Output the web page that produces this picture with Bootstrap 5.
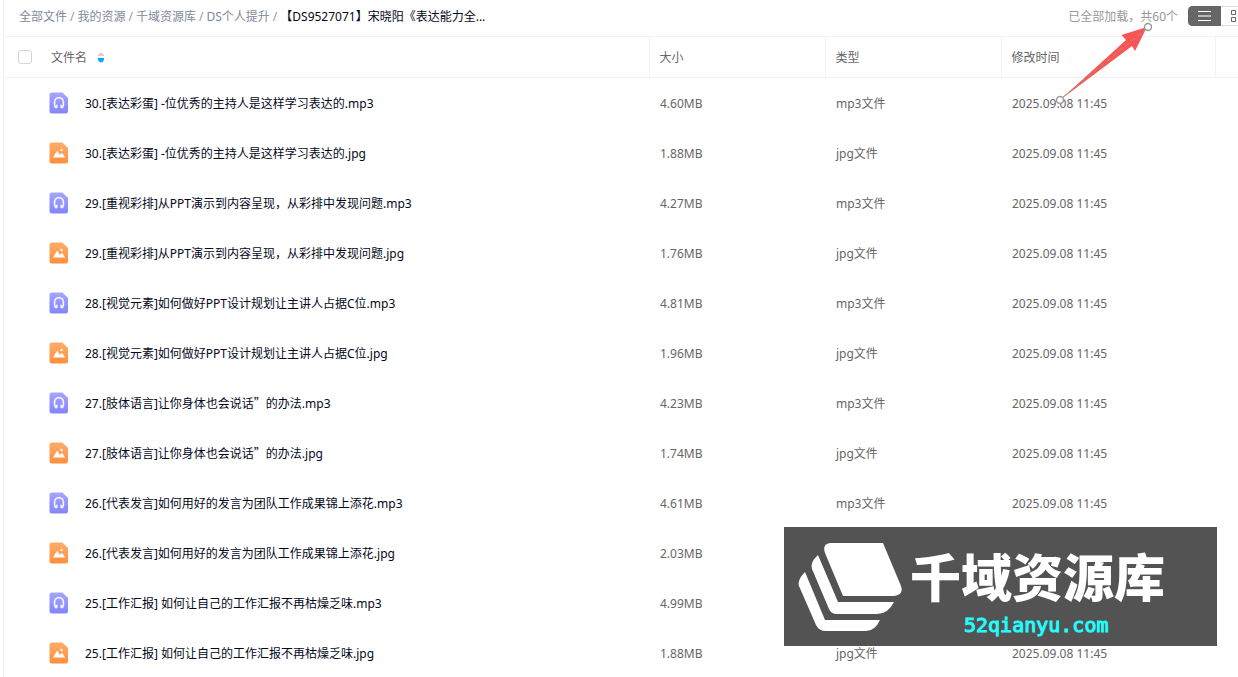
<!DOCTYPE html>
<html lang="zh-CN">
<head>
<meta charset="utf-8">
<meta name="viewport" content="width=device-width, initial-scale=1">
<title>千域资源库</title>
<link href="https://cdn.jsdelivr.net/npm/bootstrap@5.3.0/dist/css/bootstrap.min.css" rel="stylesheet">
<style>
body { font-family: "Noto Sans", "Noto Sans CJK SC", sans-serif; font-size: 12px; line-height: 18px; color: #636d7e; }
.pan { margin-left: 3px; border-left: 1px solid #f1f2f4; }
.topbar { height: 36px; padding-left: 15px; padding-bottom: 4px; }
.breadcrumb { --bs-breadcrumb-divider: "/"; --bs-breadcrumb-item-padding-x: 3px; --bs-breadcrumb-divider-color: #999; --bs-breadcrumb-item-active-color: #03081a; padding-top: 2px; }
.breadcrumb a { color: #818999; }
.loaded { color: #999; margin-right: 10px; padding-top: 2px; }
.view-switch { margin-right: -15px; }
.view-switch .btn { width: 33px; height: 20px; padding: 0; line-height: 0; border: 1px solid #dcdcdc; border-radius: 4px; background: #fff; }
.view-switch .btn.active { background: #666; border-color: #666; }
.view-switch svg { display: block; margin: auto; }
.files { table-layout: fixed; --bs-table-bg: transparent; margin: 0; }
.files > :not(caption) > * > * { border: 0; padding: 2px 10px 0; vertical-align: middle; color: #666; }
.files > thead > tr > th { height: 41px; font-weight: 400; border: solid #f1f2f4; border-width: 1px 0 1px 1px; }
.files > thead > tr > th:first-child { border-left: 0; padding-left: 14px; }
.files > tbody > tr > td { height: 50px; padding: 2px 11px 0; }
.files > tbody > tr > td:first-child { padding-left: 45px; }
.files > tbody a { color: #03081a; }
.files .form-check-input { width: 14px; height: 14px; margin: 0 19px 2px 0; border-color: #d4d4d4; border-radius: 3px; }
.col-info { width: 176px; }
.col-time { width: 214px; }
.col-end { width: 23px; }
.sort { font-size: 12px; line-height: 18px; color: #666; }
.file-icon { width: 20px; height: 22px; margin: 0 16px 2px 0; vertical-align: middle; }
.file-icon + a { vertical-align: middle; }
.full-width { font-family: "Noto Sans CJK SC", sans-serif; }
.pointer { right: 86px; top: 20px; pointer-events: none; }
.brand-mark { right: 21px; bottom: 31px; width: 433px; height: 119px; padding-left: 14px; background: #535353; }
.brand-name { font-family: "Noto Sans CJK SC", sans-serif; font-weight: 900; font-size: 51px; line-height: 60px; color: #fff; padding-top: 12px; }
.brand-url { font-family: "DejaVu Sans Mono", monospace; font-size: 20px; line-height: 32px; color: #2ff; padding: 4px 0 0 54px; -webkit-text-stroke: 1px #2ff; }
</style>
</head>
<body>
<svg width="0" height="0" class="position-absolute" aria-hidden="true">
  <defs>
    <linearGradient id="violet" x2="0" y2="1"><stop stop-color="#a5a5ff"/><stop offset="1" stop-color="#8585fb"/></linearGradient>
    <linearGradient id="amber" x2="0" y2="1"><stop stop-color="#ffad6b"/><stop offset="1" stop-color="#ff8e3c"/></linearGradient>
    <symbol id="audio" viewBox="0 0 20 22">
      <path fill="url(#violet)" d="M3 .5h10.500l5.500 5.500v13a2.500 2.500 0 0 1-2.500 2.500h-13.500a2.500 2.500 0 0 1-2.500-2.500v-16a2.500 2.500 0 0 1 2.500-2.500z"/>
      <path fill="none" stroke="#f2f2ff" stroke-width="1.700" d="M8.200 15.500H6.500L5.600 13V10a4.400 4.400 0 0 1 8.800 0V13L13.500 15.500H11.800M7.800 15.800V12.800M12.200 15.800V12.800"/>
    </symbol>
    <symbol id="image" viewBox="0 0 20 22">
      <path fill="url(#amber)" d="M3 .5h10.500l5.500 5.500v13a2.500 2.500 0 0 1-2.500 2.500h-13.500a2.500 2.500 0 0 1-2.500-2.500v-16a2.500 2.500 0 0 1 2.500-2.500z"/>
      <path fill="#fff" d="M4 15.500l3.700-6.200q.5-.7 1 0l2.300 3.700 1.300-1.800q.5-.6 1 0l2.900 4.300z"/><circle cx="12.500" cy="8" r="1.200" fill="#fff"/>
    </symbol>
  </defs>
</svg>

<div class="position-relative vh-100 overflow-hidden">
  <main class="pan h-100">
    <header class="topbar d-flex align-items-center">
      <nav aria-label="路径">
        <ol class="breadcrumb flex-nowrap text-nowrap mb-0">
          <li class="breadcrumb-item"><a class="text-decoration-none" href="#">全部文件</a></li>
          <li class="breadcrumb-item"><a class="text-decoration-none" href="#">我的资源</a></li>
          <li class="breadcrumb-item"><a class="text-decoration-none" href="#">千域资源库</a></li>
          <li class="breadcrumb-item"><a class="text-decoration-none" href="#">DS个人提升</a></li>
          <li class="breadcrumb-item active" aria-current="page">【DS9527071】宋晓阳《表达能力全...</li>
        </ol>
      </nav>
      <span class="loaded ms-auto text-nowrap">已全部加载，共60个</span>
      <div class="btn-group view-switch" role="group" aria-label="显示方式">
        <button type="button" class="btn active" aria-label="列表"><svg width="13" height="12" stroke="#fff"><path d="M0 1.500h13M0 10.500h13"/><path d="M0 6h13" stroke="#bbb" stroke-width="2"/></svg></button>
        <button type="button" class="btn" aria-label="网格"><svg width="12" height="12" fill="none" stroke="#666"><path d="M.5.5h4v4h-4zM7.500.5h4v4h-4zM.5 7.500h4v4h-4zM7.500 7.500h4v4h-4z"/></svg></button>
      </div>
    </header>

    <table class="table files text-nowrap">
      <colgroup><col><col class="col-info"><col class="col-info"><col class="col-time"><col class="col-end"></colgroup>
      <thead>
        <tr>
          <th scope="col"><div class="d-flex align-items-center"><input class="form-check-input" type="checkbox" aria-label="全选"><button type="button" class="sort btn btn-link p-0 border-0 text-decoration-none d-flex align-items-center">文件名<svg class="ms-2" width="12" height="12" aria-hidden="true"><path d="M3 4V3Q6-2 9 3V4z" fill="#d0d0d0"/><path d="M3 6h6v2Q6 13 3 8z" fill="#09aaff"/></svg></button></div></th>
          <th scope="col">大小</th><th scope="col">类型</th><th scope="col">修改时间</th><th></th>
        </tr>
      </thead>
      <tbody>
        <tr><td><svg class="file-icon"><use href="#audio"/></svg><a class="text-decoration-none" href="#">30.[表达彩蛋] -位优秀的主持人是这样学习表达的.mp3</a></td><td>4.60MB</td><td>mp3文件</td><td>2025.09.08 11:45</td><td></td></tr>
        <tr><td><svg class="file-icon"><use href="#image"/></svg><a class="text-decoration-none" href="#">30.[表达彩蛋] -位优秀的主持人是这样学习表达的.jpg</a></td><td>1.88MB</td><td>jpg文件</td><td>2025.09.08 11:45</td><td></td></tr>
        <tr><td><svg class="file-icon"><use href="#audio"/></svg><a class="text-decoration-none" href="#">29.[重视彩排]从PPT演示到内容呈现，从彩排中发现问题.mp3</a></td><td>4.27MB</td><td>mp3文件</td><td>2025.09.08 11:45</td><td></td></tr>
        <tr><td><svg class="file-icon"><use href="#image"/></svg><a class="text-decoration-none" href="#">29.[重视彩排]从PPT演示到内容呈现，从彩排中发现问题.jpg</a></td><td>1.76MB</td><td>jpg文件</td><td>2025.09.08 11:45</td><td></td></tr>
        <tr><td><svg class="file-icon"><use href="#audio"/></svg><a class="text-decoration-none" href="#">28.[视觉元素]如何做好PPT设计规划让主讲人占据C位.mp3</a></td><td>4.81MB</td><td>mp3文件</td><td>2025.09.08 11:45</td><td></td></tr>
        <tr><td><svg class="file-icon"><use href="#image"/></svg><a class="text-decoration-none" href="#">28.[视觉元素]如何做好PPT设计规划让主讲人占据C位.jpg</a></td><td>1.96MB</td><td>jpg文件</td><td>2025.09.08 11:45</td><td></td></tr>
        <tr><td><svg class="file-icon"><use href="#audio"/></svg><a class="text-decoration-none" href="#">27.[肢体语言]让你身体也会说话<span class="full-width">”</span>的办法.mp3</a></td><td>4.23MB</td><td>mp3文件</td><td>2025.09.08 11:45</td><td></td></tr>
        <tr><td><svg class="file-icon"><use href="#image"/></svg><a class="text-decoration-none" href="#">27.[肢体语言]让你身体也会说话<span class="full-width">”</span>的办法.jpg</a></td><td>1.74MB</td><td>jpg文件</td><td>2025.09.08 11:45</td><td></td></tr>
        <tr><td><svg class="file-icon"><use href="#audio"/></svg><a class="text-decoration-none" href="#">26.[代表发言]如何用好的发言为团队工作成果锦上添花.mp3</a></td><td>4.61MB</td><td>mp3文件</td><td>2025.09.08 11:45</td><td></td></tr>
        <tr><td><svg class="file-icon"><use href="#image"/></svg><a class="text-decoration-none" href="#">26.[代表发言]如何用好的发言为团队工作成果锦上添花.jpg</a></td><td>2.03MB</td><td>jpg文件</td><td>2025.09.08 11:45</td><td></td></tr>
        <tr><td><svg class="file-icon"><use href="#audio"/></svg><a class="text-decoration-none" href="#">25.[工作汇报] 如何让自己的工作汇报不再枯燥乏味.mp3</a></td><td>4.99MB</td><td>mp3文件</td><td>2025.09.08 11:45</td><td></td></tr>
        <tr><td><svg class="file-icon"><use href="#image"/></svg><a class="text-decoration-none" href="#">25.[工作汇报] 如何让自己的工作汇报不再枯燥乏味.jpg</a></td><td>1.88MB</td><td>jpg文件</td><td>2025.09.08 11:45</td><td></td></tr>
      </tbody>
    </table>
  </main>

  <svg class="pointer position-absolute" width="100" height="86" aria-hidden="true">
    <path fill="#fa5552" d="M8 80L74 20 69.500 15 95 7 83 31 80 26z"/>
    <path d="M11 77L93 10" stroke="#999" stroke-dasharray="5 3"/>
    <g fill="#fff" stroke="#999" stroke-width="1.500"><circle cx="8" cy="80" r="3.500"/><circle cx="96" cy="7" r="3.500"/></g>
  </svg>

  <div class="brand-mark position-absolute d-flex align-items-center">
    <svg width="104" height="92" viewBox="0 0 104 92" fill="#fff" aria-hidden="true">
      <path d="M32 2h53L103 45Q106 54 96 55H45L27 12Q24 3 32 2z"/>
      <path d="M20 14L40 61H96Q90 73 79 73H39Q33 73 31 68L14 28Q12 21 20 14z"/>
      <path d="M7 31L27 79H82Q77 90 68 90H28Q21 90 18 84L1 45Q-1 39 7 31z"/>
    </svg>
    <div class="ms-2 text-nowrap">
      <div class="brand-name">千域资源库</div>
      <div class="brand-url">52qianyu.com</div>
    </div>
  </div>
</div>
<script src="https://cdn.jsdelivr.net/npm/bootstrap@5.3.0/dist/js/bootstrap.bundle.min.js"></script>
</body>
</html>
